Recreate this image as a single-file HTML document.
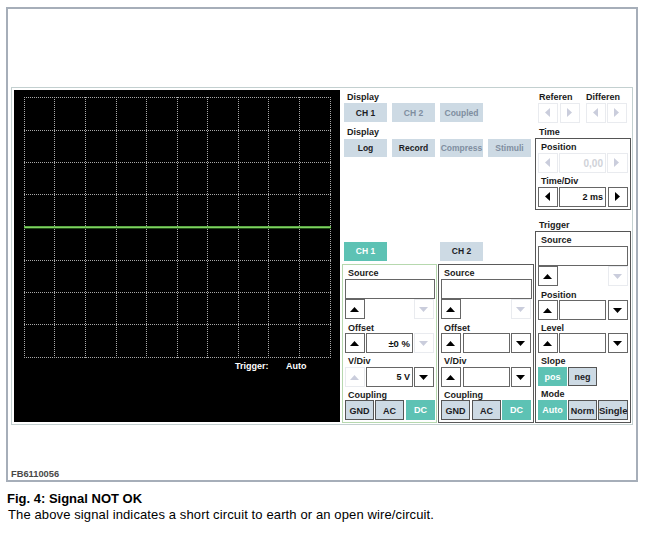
<!DOCTYPE html>
<html><head><meta charset="utf-8"><style>
html,body{margin:0;padding:0;background:#fff;width:646px;height:533px;overflow:hidden}
body{position:relative;font-family:"Liberation Sans",sans-serif}
div,svg{position:absolute;box-sizing:border-box}
.t{white-space:nowrap;line-height:10px}
.b{text-align:center;font-weight:bold;white-space:nowrap;overflow:hidden}
.i{text-align:right;font-weight:bold;font-size:9px;padding-right:2px;background:#fff;white-space:nowrap}
</style></head><body>
<div style="left:6px;top:7px;width:632px;height:475px;border:2px solid #a6aeb9"></div>
<div style="left:11px;top:87px;width:622px;height:338px;border:1px solid #c3d0d0"></div>
<div style="left:14px;top:90px;width:326px;height:332px;background:#000"></div>
<svg style="left:0;top:0" width="646" height="533" shape-rendering="crispEdges"><line x1="24.5" y1="97" x2="24.5" y2="358" stroke="#a8a8a8" stroke-width="1" stroke-dasharray="1 1"/><line x1="54.5" y1="97" x2="54.5" y2="358" stroke="#a8a8a8" stroke-width="1" stroke-dasharray="1 1"/><line x1="85.5" y1="97" x2="85.5" y2="358" stroke="#a8a8a8" stroke-width="1" stroke-dasharray="1 1"/><line x1="116.5" y1="97" x2="116.5" y2="358" stroke="#a8a8a8" stroke-width="1" stroke-dasharray="1 1"/><line x1="146.5" y1="97" x2="146.5" y2="358" stroke="#a8a8a8" stroke-width="1" stroke-dasharray="1 1"/><line x1="177.5" y1="97" x2="177.5" y2="358" stroke="#a8a8a8" stroke-width="1" stroke-dasharray="1 1"/><line x1="207.5" y1="97" x2="207.5" y2="358" stroke="#a8a8a8" stroke-width="1" stroke-dasharray="1 1"/><line x1="238.5" y1="97" x2="238.5" y2="358" stroke="#a8a8a8" stroke-width="1" stroke-dasharray="1 1"/><line x1="268.5" y1="97" x2="268.5" y2="358" stroke="#a8a8a8" stroke-width="1" stroke-dasharray="1 1"/><line x1="299.5" y1="97" x2="299.5" y2="358" stroke="#a8a8a8" stroke-width="1" stroke-dasharray="1 1"/><line x1="330.5" y1="97" x2="330.5" y2="358" stroke="#a8a8a8" stroke-width="1" stroke-dasharray="1 1"/><line x1="24" y1="97.5" x2="331" y2="97.5" stroke="#a8a8a8" stroke-width="1" stroke-dasharray="1 1"/><line x1="24" y1="130.5" x2="331" y2="130.5" stroke="#a8a8a8" stroke-width="1" stroke-dasharray="1 1"/><line x1="24" y1="162.5" x2="331" y2="162.5" stroke="#a8a8a8" stroke-width="1" stroke-dasharray="1 1"/><line x1="24" y1="194.5" x2="331" y2="194.5" stroke="#a8a8a8" stroke-width="1" stroke-dasharray="1 1"/><line x1="24" y1="227.5" x2="331" y2="227.5" stroke="#a8a8a8" stroke-width="1" stroke-dasharray="1 1"/><line x1="24" y1="260.5" x2="331" y2="260.5" stroke="#a8a8a8" stroke-width="1" stroke-dasharray="1 1"/><line x1="24" y1="292.5" x2="331" y2="292.5" stroke="#a8a8a8" stroke-width="1" stroke-dasharray="1 1"/><line x1="24" y1="324.5" x2="331" y2="324.5" stroke="#a8a8a8" stroke-width="1" stroke-dasharray="1 1"/><line x1="24" y1="357.5" x2="331" y2="357.5" stroke="#a8a8a8" stroke-width="1" stroke-dasharray="1 1"/><rect x="24" y="226" width="307" height="1" fill="#5aa844"/><rect x="24" y="227" width="307" height="1" fill="#80d060"/><rect x="24" y="228" width="307" height="1" fill="#1e4a16"/></svg>
<div class="t" style="left:235px;top:361px;font-size:9px;color:#fff;font-weight:bold">Trigger:</div>
<div class="t" style="left:286px;top:361px;font-size:9px;color:#fff;font-weight:bold">Auto</div>
<div class="t" style="left:347px;top:92px;font-size:9px;color:#1a1a1a;font-weight:bold">Display</div>
<div class="b" style="left:344px;top:103px;width:43px;height:19px;line-height:20px;background:#cddae4;color:#1c1c24;font-size:8.5px;">CH 1</div>
<div class="b" style="left:392px;top:103px;width:43px;height:19px;line-height:20px;background:#cddae4;color:#7f8ea0;font-size:8.5px;">CH 2</div>
<div class="b" style="left:440px;top:103px;width:43px;height:19px;line-height:20px;background:#cddae4;color:#7f8ea0;font-size:8.5px;">Coupled</div>
<div class="t" style="left:347px;top:127px;font-size:9px;color:#1a1a1a;font-weight:bold">Display</div>
<div class="b" style="left:344px;top:139px;width:43px;height:18px;line-height:19px;background:#cddae4;color:#1c1c24;font-size:8.5px;">Log</div>
<div class="b" style="left:392px;top:139px;width:43px;height:18px;line-height:19px;background:#cddae4;color:#1c1c24;font-size:8.5px;">Record</div>
<div class="b" style="left:440px;top:139px;width:43px;height:18px;line-height:19px;background:#cddae4;color:#7f8ea0;font-size:8.5px;">Compress</div>
<div class="b" style="left:488px;top:139px;width:43px;height:18px;line-height:19px;background:#cddae4;color:#7f8ea0;font-size:8.5px;">Stimuli</div>
<div class="t" style="left:539px;top:92px;font-size:9px;color:#1a1a1a;font-weight:bold">Referen</div>
<div class="t" style="left:586px;top:92px;font-size:9px;color:#1a1a1a;font-weight:bold">Differen</div>
<div style="left:538px;top:103px;width:20px;height:20px;border:1px solid #e9ebef;background:#fff"></div>
<svg style="left:545.3px;top:108.2px" width="5" height="9"><polygon points="5,0 5,9 0,4.5" fill="#cacddc"/></svg>
<div style="left:560px;top:103px;width:20px;height:20px;border:1px solid #e9ebef;background:#fff"></div>
<svg style="left:566.5px;top:108.2px" width="5" height="9"><polygon points="0,0 5,4.5 0,9" fill="#cacddc"/></svg>
<div style="left:586px;top:103px;width:20px;height:20px;border:1px solid #e9ebef;background:#fff"></div>
<svg style="left:593.3px;top:108.2px" width="5" height="9"><polygon points="5,0 5,9 0,4.5" fill="#cacddc"/></svg>
<div style="left:607px;top:103px;width:20px;height:20px;border:1px solid #e9ebef;background:#fff"></div>
<svg style="left:613.5px;top:108.2px" width="5" height="9"><polygon points="0,0 5,4.5 0,9" fill="#cacddc"/></svg>
<div class="t" style="left:539px;top:127px;font-size:9px;color:#1a1a1a;font-weight:bold">Time</div>
<div style="left:535px;top:138px;width:96px;height:72px;border:1px solid #555"></div>
<div class="t" style="left:541px;top:142px;font-size:9px;color:#1a1a1a;font-weight:bold">Position</div>
<div style="left:538px;top:153px;width:20px;height:20px;border:1px solid #e9ebef;background:#fff"></div>
<svg style="left:545.3px;top:158.2px" width="5" height="9"><polygon points="5,0 5,9 0,4.5" fill="#cacddc"/></svg>
<div class="i" style="left:559px;top:153px;width:47px;height:20px;line-height:19px;border:1px solid #e9ebef;color:#cfd2d8"><span style="font-size:10px">0,00</span></div>
<div style="left:607px;top:153px;width:21px;height:20px;border:1px solid #e9ebef;background:#fff"></div>
<svg style="left:614.0px;top:158.2px" width="5" height="9"><polygon points="0,0 5,4.5 0,9" fill="#cacddc"/></svg>
<div class="t" style="left:541px;top:176px;font-size:9px;color:#1a1a1a;font-weight:bold">Time/Div</div>
<div style="left:538px;top:187px;width:20px;height:20px;border:1px solid #666;background:#fff"></div>
<svg style="left:545.3px;top:192.2px" width="5" height="9"><polygon points="5,0 5,9 0,4.5" fill="#000"/></svg>
<div class="i" style="left:559px;top:187px;width:47px;height:20px;line-height:19px;border:1px solid #666;color:#111">2 ms</div>
<div style="left:608px;top:187px;width:20px;height:20px;border:1px solid #666;background:#fff"></div>
<svg style="left:614.5px;top:192.2px" width="5" height="9"><polygon points="0,0 5,4.5 0,9" fill="#000"/></svg>
<div class="t" style="left:539px;top:220px;font-size:9px;color:#1a1a1a;font-weight:bold">Trigger</div>
<div style="left:535px;top:231px;width:96px;height:192px;border:1px solid #555"></div>
<div class="t" style="left:541px;top:235px;font-size:9px;color:#1a1a1a;font-weight:bold">Source</div>
<div class="i" style="left:538px;top:246px;width:90px;height:20px;line-height:19px;border:1px solid #666;color:#111"></div>
<div style="left:538px;top:266px;width:20px;height:20px;border:1px solid #666;background:#fff"></div>
<svg style="left:543.3px;top:273.7px" width="9" height="5"><polygon points="0,5 4.5,0 9,5" fill="#000"/></svg>
<div style="left:608px;top:266px;width:20px;height:20px;border:1px solid #e9ebef;background:#fff"></div>
<svg style="left:613.3px;top:273.5px" width="9" height="5"><polygon points="0,0 9,0 4.5,5" fill="#cacddc"/></svg>
<div class="t" style="left:541px;top:290px;font-size:9px;color:#1a1a1a;font-weight:bold">Position</div>
<div style="left:538px;top:300px;width:20px;height:20px;border:1px solid #666;background:#fff"></div>
<svg style="left:543.3px;top:307.7px" width="9" height="5"><polygon points="0,5 4.5,0 9,5" fill="#000"/></svg>
<div class="i" style="left:559px;top:300px;width:47px;height:20px;line-height:19px;border:1px solid #666;color:#111"></div>
<div style="left:608px;top:300px;width:20px;height:20px;border:1px solid #666;background:#fff"></div>
<svg style="left:613.3px;top:307.5px" width="9" height="5"><polygon points="0,0 9,0 4.5,5" fill="#000"/></svg>
<div class="t" style="left:541px;top:323px;font-size:9px;color:#1a1a1a;font-weight:bold">Level</div>
<div style="left:538px;top:333px;width:20px;height:20px;border:1px solid #666;background:#fff"></div>
<svg style="left:543.3px;top:340.7px" width="9" height="5"><polygon points="0,5 4.5,0 9,5" fill="#000"/></svg>
<div class="i" style="left:559px;top:333px;width:47px;height:20px;line-height:19px;border:1px solid #666;color:#111"></div>
<div style="left:608px;top:333px;width:20px;height:20px;border:1px solid #666;background:#fff"></div>
<svg style="left:613.3px;top:340.5px" width="9" height="5"><polygon points="0,0 9,0 4.5,5" fill="#000"/></svg>
<div class="t" style="left:541px;top:356px;font-size:9px;color:#1a1a1a;font-weight:bold">Slope</div>
<div class="b" style="left:538px;top:367px;width:29px;height:19px;line-height:20px;background:#5dc2b4;color:#fff;font-size:9px;">pos</div>
<div class="b" style="left:568px;top:367px;width:29px;height:19px;line-height:19px;background:#cddae4;color:#1c1c24;font-size:9px;border:1px solid #555;">neg</div>
<div class="t" style="left:541px;top:389px;font-size:9px;color:#1a1a1a;font-weight:bold">Mode</div>
<div class="b" style="left:538px;top:400px;width:29px;height:20px;line-height:21px;background:#5dc2b4;color:#fff;font-size:9px;">Auto</div>
<div class="b" style="left:568px;top:400px;width:29px;height:20px;line-height:20px;background:#cddae4;color:#1c1c24;font-size:9px;border:1px solid #555;">Norm</div>
<div class="b" style="left:598px;top:400px;width:30px;height:20px;line-height:20px;background:#cddae4;color:#1c1c24;font-size:9.5px;border:1px solid #555;">Single</div>
<div class="b" style="left:344px;top:242px;width:43px;height:19px;line-height:19px;background:#5dc2b4;color:#fff;font-size:8.5px;">CH 1</div>
<div class="b" style="left:440px;top:242px;width:43px;height:19px;line-height:19px;background:#cddae4;color:#1c1c24;font-size:8.5px;">CH 2</div>
<div style="left:342px;top:264px;width:95px;height:159px;border:1px solid #b6d8ae"></div>
<div class="t" style="left:348px;top:268px;font-size:9px;color:#1a1a1a;font-weight:bold">Source</div>
<div class="i" style="left:345px;top:279px;width:90px;height:20px;line-height:19px;border:1px solid #666;color:#111"></div>
<div style="left:345px;top:299px;width:20px;height:20px;border:1px solid #666;background:#fff"></div>
<svg style="left:350.3px;top:306.7px" width="9" height="5"><polygon points="0,5 4.5,0 9,5" fill="#000"/></svg>
<div style="left:414px;top:299px;width:20px;height:20px;border:1px solid #e9ebef;background:#fff"></div>
<svg style="left:419.3px;top:306.5px" width="9" height="5"><polygon points="0,0 9,0 4.5,5" fill="#cacddc"/></svg>
<div class="t" style="left:348px;top:323px;font-size:9px;color:#1a1a1a;font-weight:bold">Offset</div>
<div style="left:345px;top:333px;width:20px;height:20px;border:1px solid #666;background:#fff"></div>
<svg style="left:350.3px;top:340.7px" width="9" height="5"><polygon points="0,5 4.5,0 9,5" fill="#000"/></svg>
<div class="i" style="left:366px;top:333px;width:47px;height:20px;line-height:19px;border:1px solid #666;color:#111"><span style="font-size:9.5px">±0 %</span></div>
<div style="left:414px;top:333px;width:20px;height:20px;border:1px solid #e9ebef;background:#fff"></div>
<svg style="left:419.3px;top:340.5px" width="9" height="5"><polygon points="0,0 9,0 4.5,5" fill="#cacddc"/></svg>
<div class="t" style="left:348px;top:356px;font-size:9px;color:#1a1a1a;font-weight:bold">V/Div</div>
<div style="left:345px;top:367px;width:20px;height:20px;border:1px solid #e9ebef;background:#fff"></div>
<svg style="left:350.3px;top:374.7px" width="9" height="5"><polygon points="0,5 4.5,0 9,5" fill="#cacddc"/></svg>
<div class="i" style="left:366px;top:367px;width:47px;height:20px;line-height:19px;border:1px solid #666;color:#111">5 V</div>
<div style="left:414px;top:367px;width:20px;height:20px;border:1px solid #666;background:#fff"></div>
<svg style="left:419.3px;top:374.5px" width="9" height="5"><polygon points="0,0 9,0 4.5,5" fill="#000"/></svg>
<div class="t" style="left:348px;top:390px;font-size:9px;color:#1a1a1a;font-weight:bold">Coupling</div>
<div class="b" style="left:345px;top:400px;width:29px;height:20px;line-height:20px;background:#cddae4;color:#1c1c24;font-size:9px;border:1px solid #555;">GND</div>
<div class="b" style="left:375px;top:400px;width:29px;height:20px;line-height:20px;background:#cddae4;color:#1c1c24;font-size:9px;border:1px solid #555;">AC</div>
<div class="b" style="left:406px;top:400px;width:29px;height:20px;line-height:21px;background:#5dc2b4;color:#fff;font-size:9px;">DC</div>
<div style="left:438px;top:264px;width:96px;height:159px;border:1px solid #5a5a5a"></div>
<div class="t" style="left:444px;top:268px;font-size:9px;color:#1a1a1a;font-weight:bold">Source</div>
<div class="i" style="left:441px;top:279px;width:91px;height:20px;line-height:19px;border:1px solid #666;color:#111"></div>
<div style="left:441px;top:299px;width:20px;height:20px;border:1px solid #666;background:#fff"></div>
<svg style="left:446.3px;top:306.7px" width="9" height="5"><polygon points="0,5 4.5,0 9,5" fill="#000"/></svg>
<div style="left:511px;top:299px;width:20px;height:20px;border:1px solid #e9ebef;background:#fff"></div>
<svg style="left:516.3px;top:306.5px" width="9" height="5"><polygon points="0,0 9,0 4.5,5" fill="#cacddc"/></svg>
<div class="t" style="left:444px;top:323px;font-size:9px;color:#1a1a1a;font-weight:bold">Offset</div>
<div style="left:441px;top:333px;width:20px;height:20px;border:1px solid #666;background:#fff"></div>
<svg style="left:446.3px;top:340.7px" width="9" height="5"><polygon points="0,5 4.5,0 9,5" fill="#000"/></svg>
<div class="i" style="left:463px;top:333px;width:47px;height:20px;line-height:19px;border:1px solid #666;color:#111"></div>
<div style="left:511px;top:333px;width:20px;height:20px;border:1px solid #666;background:#fff"></div>
<svg style="left:516.3px;top:340.5px" width="9" height="5"><polygon points="0,0 9,0 4.5,5" fill="#000"/></svg>
<div class="t" style="left:444px;top:356px;font-size:9px;color:#1a1a1a;font-weight:bold">V/Div</div>
<div style="left:441px;top:367px;width:20px;height:20px;border:1px solid #666;background:#fff"></div>
<svg style="left:446.3px;top:374.7px" width="9" height="5"><polygon points="0,5 4.5,0 9,5" fill="#000"/></svg>
<div class="i" style="left:463px;top:367px;width:47px;height:20px;line-height:19px;border:1px solid #666;color:#111"></div>
<div style="left:511px;top:367px;width:20px;height:20px;border:1px solid #666;background:#fff"></div>
<svg style="left:516.3px;top:374.5px" width="9" height="5"><polygon points="0,0 9,0 4.5,5" fill="#000"/></svg>
<div class="t" style="left:444px;top:390px;font-size:9px;color:#1a1a1a;font-weight:bold">Coupling</div>
<div class="b" style="left:441px;top:400px;width:29px;height:20px;line-height:20px;background:#cddae4;color:#1c1c24;font-size:9px;border:1px solid #555;">GND</div>
<div class="b" style="left:472px;top:400px;width:29px;height:20px;line-height:20px;background:#cddae4;color:#1c1c24;font-size:9px;border:1px solid #555;">AC</div>
<div class="b" style="left:502px;top:400px;width:29px;height:20px;line-height:21px;background:#5dc2b4;color:#fff;font-size:9px;">DC</div>
<div class="t" style="left:11px;top:469px;font-size:9.3px;color:#484848;font-weight:bold">FB6110056</div>
<div class="t" style="left:7px;top:491px;font-size:13px;line-height:16px;font-weight:bold;color:#000">Fig. 4: Signal NOT OK</div>
<div class="t" style="left:8px;top:507px;font-size:13px;line-height:16px;color:#000;letter-spacing:0.12px">The above signal indicates a short circuit to earth or an open wire/circuit.</div>
</body></html>
